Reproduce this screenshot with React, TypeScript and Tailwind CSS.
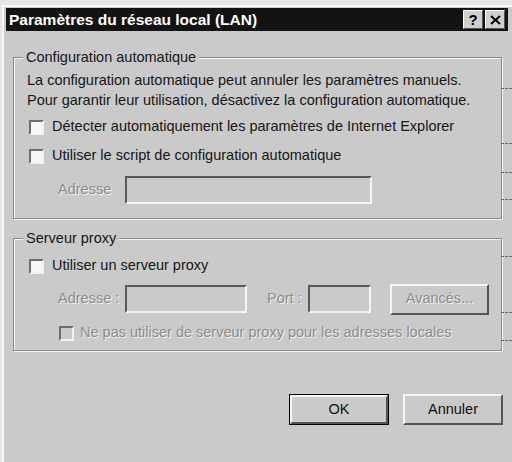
import React from "react";

const FONT = { fontFamily: '"Liberation Sans", Arial, sans-serif' };

function Check({ disabled }: { disabled?: boolean }) {
  return (
    <span
      className={`inline-block w-[15px] h-[15px] shrink-0 border-2 border-t-[#6e6e6e] border-l-[#6e6e6e] border-r-[#f2f2f2] border-b-[#f2f2f2] ${
        disabled ? "bg-[#cacaca]" : "bg-[#f7f7f7]"
      }`}
    />
  );
}

function Field({ w }: { w: string }) {
  return (
    <span
      className={`block h-[28px] ${w} border-2 border-t-[#5a5a5a] border-l-[#5a5a5a] border-r-[#f4f4f4] border-b-[#f4f4f4] bg-[#cacaca]`}
    />
  );
}

function Disabled({ children }: { children: React.ReactNode }) {
  return (
    <span className="text-[#8c8c8c] [text-shadow:1px_1px_0_#f2f2f2]">
      {children}
    </span>
  );
}

function Group({
  legend,
  className,
  children,
}: {
  legend: string;
  className: string;
  children: React.ReactNode;
}) {
  return (
    <div
      className={`relative border border-[#8a8a8a] shadow-[1px_1px_0_#f6f6f6,inset_1px_1px_0_#f6f6f6] ${className}`}
    >
      <span className="absolute left-[9px] top-[-11px] px-[3px] bg-[#cacaca] leading-[20px]">
        {legend}
      </span>
      {children}
    </div>
  );
}

const DASHES = [88, 143, 172, 199, 256, 312, 340];

export default function App() {
  return (
    <div
      className="relative w-[512px] h-[462px] overflow-hidden bg-[#e6e6e6] pt-[5px] pl-[2px] text-[14.5px] text-[#161616]"
      style={FONT}
    >
      <div className="h-full border-t-2 border-l-2 border-[#f7f7f7] bg-[#cacaca] pt-[1px] pl-[2px]">
        <div className="flex items-center h-[23px] w-[502px] bg-[#131313] pl-[3px] pr-[3px]">
          <span className="flex-1 text-white font-bold text-[15.5px]">
            Paramètres du réseau local (LAN)
          </span>
          <span className="flex items-center justify-center w-[20px] h-[19px] bg-[#cfcfcf] border border-t-white border-l-white border-r-[#555] border-b-[#555] font-bold text-[15px] text-black leading-none">
            ?
          </span>
          <span className="ml-[2px] flex items-center justify-center w-[20px] h-[19px] bg-[#cfcfcf] border border-t-white border-l-white border-r-[#555] border-b-[#555]">
            <svg width="11" height="10" viewBox="0 0 11 10">
              <path d="M1 1 L10 9 M10 1 L1 9" stroke="#000" strokeWidth="2" />
            </svg>
          </span>
        </div>

        <div className="pl-[7px] w-[496px]">
          <Group legend="Configuration automatique" className="mt-[26px] pt-[12px] pl-[13px] pb-[14px]">
            <p className="leading-[20px]">
              La configuration automatique peut annuler les paramètres manuels.
            </p>
            <p className="leading-[20px]">
              Pour garantir leur utilisation, désactivez la configuration automatique.
            </p>
            <div className="mt-[7px] flex items-center gap-[8px] ml-[2px] h-[20px]">
              <Check />
              <span>Détecter automatiquement les paramètres de Internet Explorer</span>
            </div>
            <div className="mt-[9px] flex items-center gap-[8px] ml-[2px] h-[20px]">
              <Check />
              <span>Utiliser le script de configuration automatique</span>
            </div>
            <div className="mt-[9px] flex items-center h-[29px]">
              <span className="ml-[31px] w-[67px]">
                <Disabled>Adresse</Disabled>
              </span>
              <Field w="w-[247px]" />
            </div>
          </Group>

          <Group legend="Serveur proxy" className="mt-[19px] pt-[17px] pl-[15px] pb-[8px]">
            <div className="flex items-center gap-[8px] h-[20px]">
              <Check />
              <span>Utiliser un serveur proxy</span>
            </div>
            <div className="mt-[8px] flex items-center h-[30px]">
              <span className="ml-[29px] w-[67px]">
                <Disabled>Adresse :</Disabled>
              </span>
              <Field w="w-[122px]" />
              <span className="ml-[20px] w-[41px]">
                <Disabled>Port :</Disabled>
              </span>
              <Field w="w-[63px]" />
              <span className="ml-[19px] flex items-center justify-center w-[99px] h-[31px] border-2 border-t-[#f6f6f6] border-l-[#f6f6f6] border-r-[#555] border-b-[#555]">
                <Disabled>Avancés...</Disabled>
              </span>
            </div>
            <div className="mt-[10px] flex items-center gap-[6px] ml-[30px] h-[18px]">
              <Check disabled />
              <Disabled>Ne pas utiliser de serveur proxy pour les adresses locales</Disabled>
            </div>
          </Group>
        </div>

        <div className="mt-[43px] flex justify-end gap-[14px] pr-[9px]">
          <span className="flex w-[100px] h-[31px] border border-black">
            <span className="flex flex-1 items-center justify-center border-2 border-t-[#f6f6f6] border-l-[#f6f6f6] border-r-[#555] border-b-[#555] text-[#111]">
              OK
            </span>
          </span>
          <span className="flex items-center justify-center w-[100px] h-[31px] border-2 border-t-[#f6f6f6] border-l-[#f6f6f6] border-r-[#555] border-b-[#555] text-[#111]">
            Annuler
          </span>
        </div>
      </div>

      {DASHES.map((y) => (
        <span
          key={y}
          className="absolute left-[501px] w-[11px] border-t border-dashed border-[#6a6a6a]"
          style={{ top: y }}
        />
      ))}
    </div>
  );
}
